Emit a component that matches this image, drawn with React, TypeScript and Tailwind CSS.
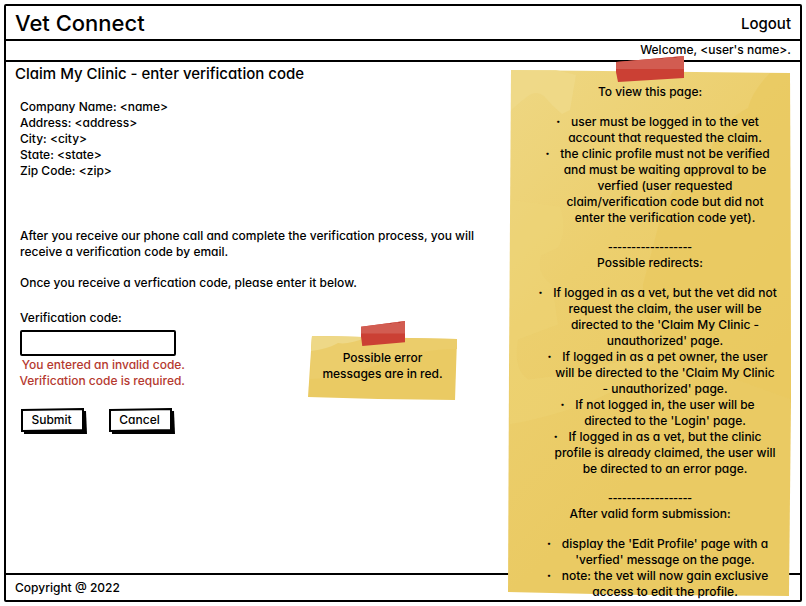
import type { ReactNode } from "react";

function NotePaper() {
  return (
    <svg
      className="absolute inset-x-0 top-0 h-[calc(100%-4px)] w-full"
      viewBox="0 0 283 527"
      preserveAspectRatio="none"
      aria-hidden="true"
    >
      <defs>
        <linearGradient id="paper" x1="0" y1="0" x2="0.4" y2="0.8">
          <stop offset="0" stopColor="#eed783" />
          <stop offset="0.5" stopColor="#eccf6e" />
          <stop offset="1" stopColor="#eaca63" />
        </linearGradient>
      </defs>
      <path d="M3 0 L282 3 L283 330 L281 527 L130 526 L0 523 L1 300 Z" fill="url(#paper)" />
      <path
        d="M3 0 H48 L68 5 L62 40 L54 44 Q44 36 36 26 Q28 20 20 26 Q12 32 3 40 Z"
        fill="#efda8a"
        opacity="0.8"
      />
      <path
        d="M282 3 L262 3 Q245 20 240 38 Q215 50 200 85 Q165 110 152 150 L135 215 Q134 260 160 285 L283 330 Z"
        fill="#eac95f"
        opacity="0.7"
      />
      <path
        d="M2 130 L52 137 Q60 160 50 178 L33 186 Q28 205 44 215 L50 255 L10 270 Q5 300 20 310 L60 305 L160 280 Q110 335 2 355 Z"
        fill="#efd67c"
        opacity="0.3"
      />
    </svg>
  );
}

function SmallNotePaper() {
  return (
    <svg
      className="absolute inset-0 h-full w-full"
      viewBox="0 0 149 66"
      preserveAspectRatio="none"
      aria-hidden="true"
    >
      <path d="M4 1 L149 4 L147 65 L70 64 L0 62 Z" fill="#eaca63" />
      <path d="M4 1 L149 4 L149 14 Q110 14 90 26 Q60 30 40 42 L2 44 Z" fill="#ebcd6b" />
      <path d="M4 1 L60 2 Q40 10 30 8 Q20 14 3 16 Z" fill="#eed887" />
    </svg>
  );
}

function Tape({ className }: { className: string }) {
  return (
    <svg
      className={className}
      viewBox="0 0 68 26"
      preserveAspectRatio="none"
      aria-hidden="true"
    >
      <path d="M0 6 L68 0 V22 L2 26 L0 16 Z" fill="#cb4034" />
      <path d="M0 6 L68 0 V13 H0 Z" fill="#d25c51" />
      <path d="M43 2 l5 0 l-2 1 Z M56 1 l6 0 l-3 1 Z" fill="#b83a30" />
    </svg>
  );
}

function SketchButton({ children, type }: { children: ReactNode; type: "submit" | "button" }) {
  return (
    <button
      type={type}
      className="relative h-[27px] w-[68px] cursor-pointer pr-[5px] pb-[3px] text-center"
    >
      <svg
        className="absolute inset-0 h-full w-full"
        viewBox="0 0 68 27"
        preserveAspectRatio="none"
        aria-hidden="true"
      >
        <path d="M4 4 L66 3 L67 26 H4 Z" fill="#000" />
        <path d="M2 2 L63 1 L63 22 L2 23 Z" fill="#fff" stroke="#000" strokeWidth="2" />
      </svg>
      <span className="relative">{children}</span>
    </button>
  );
}

function Lines({ lines }: { lines: string[] }) {
  return (
    <>
      {lines.map((line, i) => (
        <span key={i} className="block">
          {line}
        </span>
      ))}
    </>
  );
}

function NoteList({ items }: { items: string[][] }) {
  return (
    <ul className="mt-[14px] pl-[30px]">
      {items.map(([first, ...rest]) => (
        <li key={first}>
          <span className="block">
            <span className="-ml-[15px] inline-block w-[15px] text-left font-black">·</span>
            {first}
          </span>
          <Lines lines={rest} />
        </li>
      ))}
    </ul>
  );
}

function Dashes() {
  return (
    <p className="mt-[13px] font-['Liberation_Sans',sans-serif] text-[14px] leading-[16px]">
      ------------------
    </p>
  );
}

const access = [
  ["user must be logged in to the vet", "account that requested the claim."],
  [
    "the clinic profile must not be verified",
    "and must be waiting approval to be",
    "verfied (user requested",
    "claim/verification code but did not",
    "enter the verification code yet).",
  ],
];

const redirects = [
  [
    "If logged in as a vet, but the vet did not",
    "request the claim, the user will be",
    "directed to the 'Claim My Clinic -",
    "unauthorized' page.",
  ],
  [
    "If logged in as a pet owner, the user",
    "will be directed to the 'Claim My Clinic",
    "- unauthorized' page.",
  ],
  ["If not logged in, the user will be", "directed to the 'Login' page."],
  [
    "If logged in as a vet, but the clinic",
    "profile is already claimed, the user will",
    "be directed to an error page.",
  ],
];

const afterSubmit = [
  ["display the 'Edit Profile' page with a", "'verfied' message on the page."],
  ["note: the vet will now gain exclusive", "access to edit the profile."],
];

export default function App() {
  return (
    <div className="flex min-h-screen bg-white p-1 font-['Inter','Liberation_Sans',sans-serif] text-[12px] leading-[16px] font-medium text-black [font-feature-settings:'cv11']">
      <div className="relative flex flex-1 flex-col rounded-[2px] border-2 border-black">
        <header>
          <div className="flex h-[35px] items-center justify-between border-b-2 border-black px-[9px]">
            <h1 className="text-[22px] leading-[28px]">Vet Connect</h1>
            <a href="#logout" className="pt-[2px] text-[15px] leading-[20px]">
              Logout
            </a>
          </div>
          <div className="h-[21px] border-b-2 border-black px-[9px] pt-px text-right">
            Welcome, &lt;user's name&gt;.
          </div>
        </header>

        <main className="flex-1 px-[9px] pt-[2px]">
          <h2 className="text-[15px] leading-[20px]">Claim My Clinic - enter verification code</h2>

          <div className="pt-[15px] pl-[5px]">
            <p>Company Name: &lt;name&gt;</p>
            <p>Address: &lt;address&gt;</p>
            <p>City: &lt;city&gt;</p>
            <p>State: &lt;state&gt;</p>
            <p>Zip Code: &lt;zip&gt;</p>

            <p className="mt-[49px] w-[470px]">
              After you receive our phone call and complete the verification process, you will
              receive a verification code by email.
            </p>
            <p className="mt-[15px]">
              Once you receive a verfication code, please enter it below.
            </p>

            <div className="mt-[19px] flex items-start">
              <form className="w-[288px]" onSubmit={(e) => e.preventDefault()}>
                <label htmlFor="code" className="block">
                  Verification code:
                </label>
                <input
                  id="code"
                  type="text"
                  className="mt-[4px] block h-[26px] w-[156px] rounded-[2px] border-2 border-black bg-white px-1 outline-none"
                />
                <div className="-ml-[5px] mt-[1px] w-[170px] text-right whitespace-nowrap text-[#b5392f]">
                  <p>You entered an invalid code.</p>
                  <p>Verification code is required.</p>
                </div>
                <div className="mt-[19px] flex gap-[20px]">
                  <SketchButton type="submit">Submit</SketchButton>
                  <SketchButton type="button">Cancel</SketchButton>
                </div>
              </form>

              <aside className="relative mt-[25px] h-[66px] w-[149px] pt-[15px] text-center whitespace-nowrap">
                <SmallNotePaper />
                <Tape className="absolute -top-[14px] left-[53px] h-[25px] w-[44px]" />
                <p className="relative">
                  <Lines lines={["Possible error", "messages are in red."]} />
                </p>
              </aside>
            </div>
          </div>
        </main>

        <footer className="h-[27px] border-t-2 border-black px-[9px] pt-[5px]">
          Copyright @ 2022
        </footer>

        <aside className="absolute top-[64px] right-[9px] w-[283px] pt-[14px] pr-[11px] pl-[12px] text-center whitespace-nowrap">
          <NotePaper />
          <Tape className="absolute -top-[14px] left-[108px] h-[26px] w-[68px]" />
          <div className="relative">
            <h3>To view this page:</h3>
            <NoteList items={access} />
            <Dashes />
            <h3>Possible redirects:</h3>
            <NoteList items={redirects} />
            <Dashes />
            <h3>After valid form submission:</h3>
            <NoteList items={afterSubmit} />
          </div>
        </aside>
      </div>
    </div>
  );
}
